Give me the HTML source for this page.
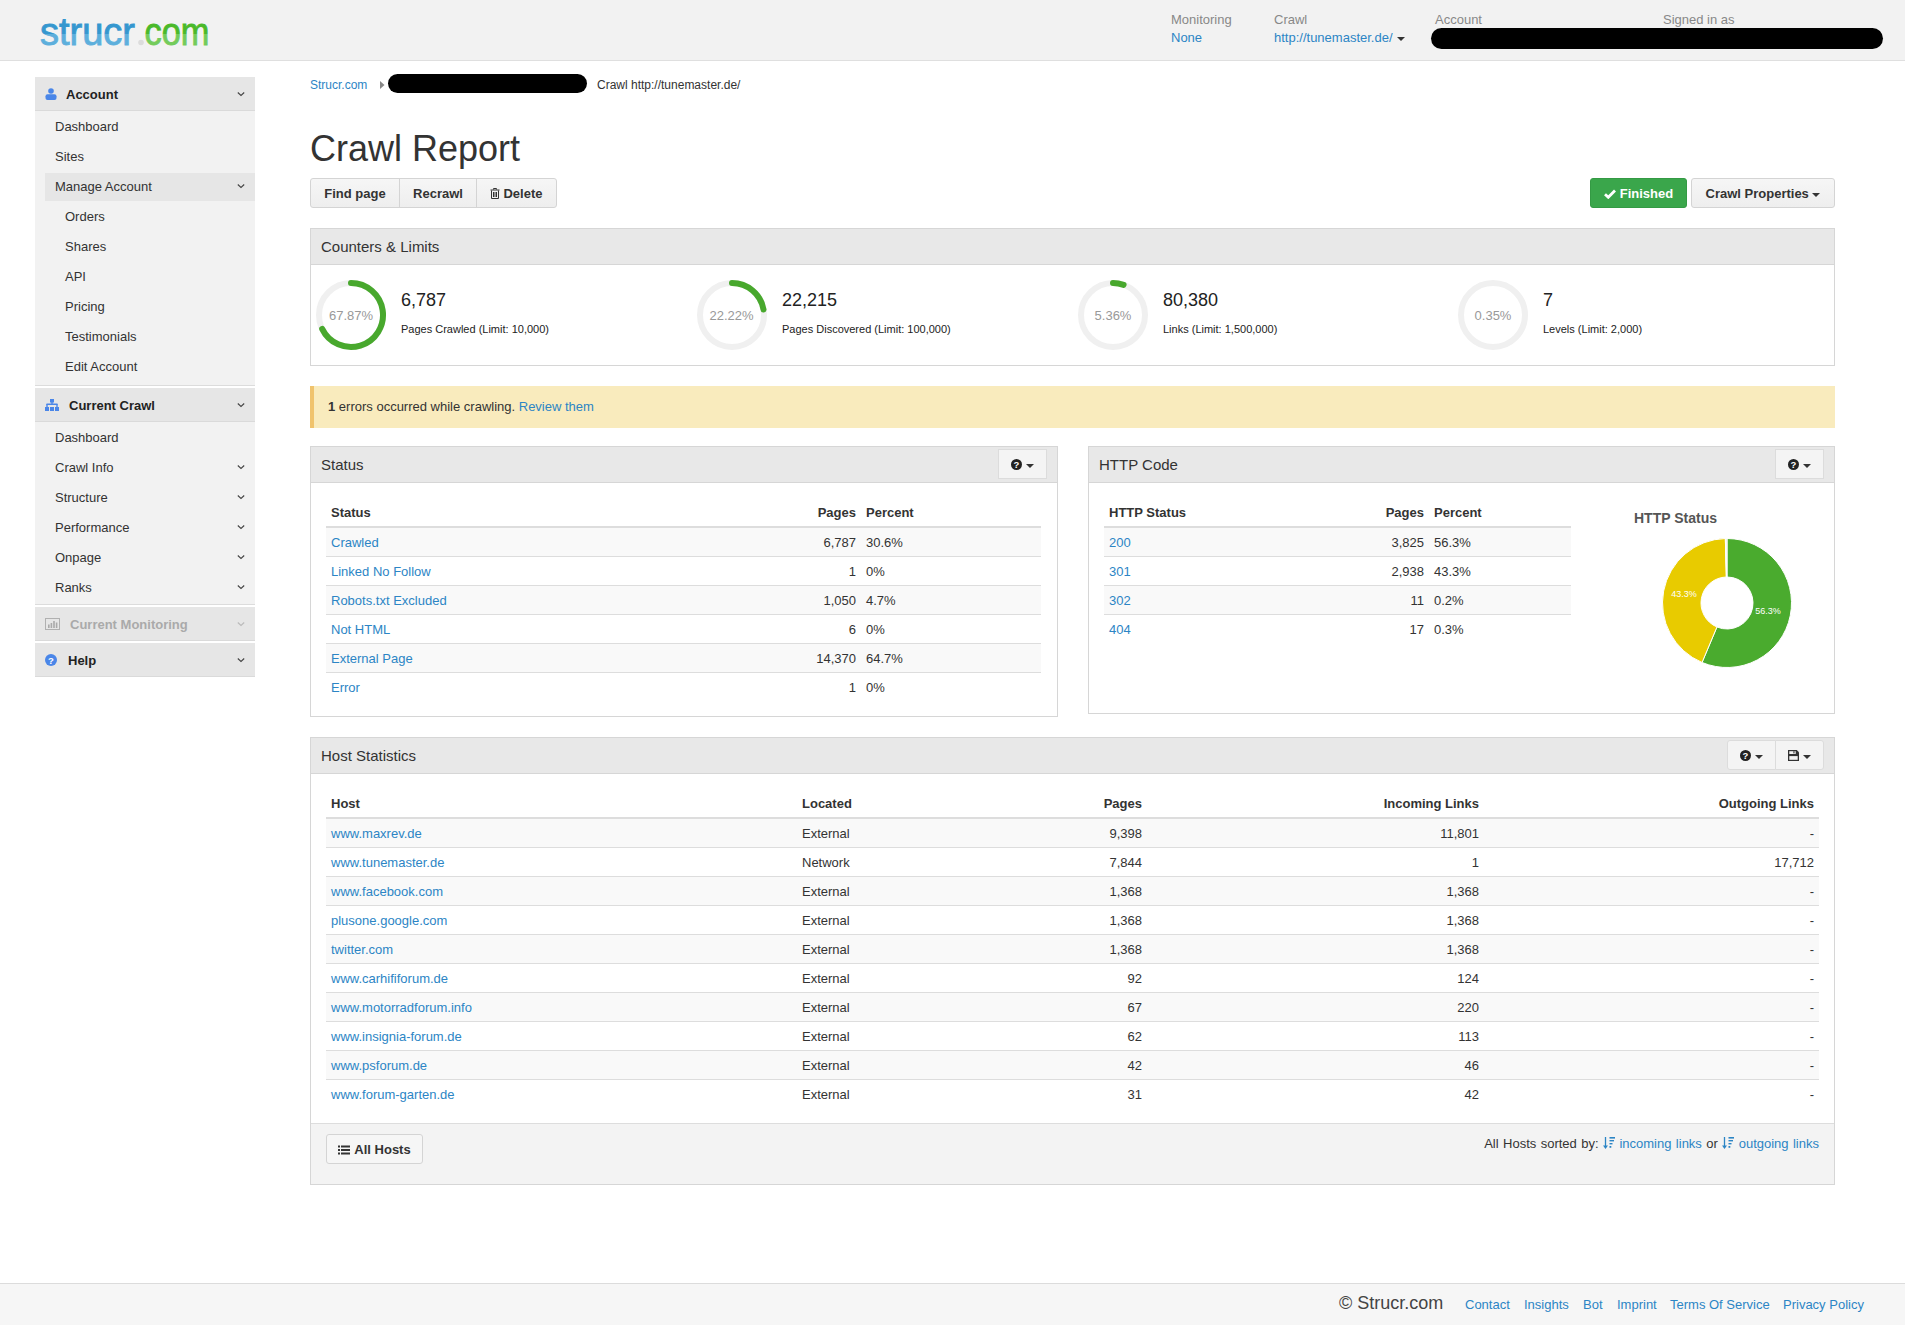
<!DOCTYPE html>
<html><head><meta charset="utf-8">
<style>
*{box-sizing:border-box;margin:0;padding:0}
html,body{width:1905px;height:1325px;overflow:hidden;background:#fff}
body{font-family:"Liberation Sans",sans-serif;font-size:13px;color:#333;position:relative;line-height:18px}
a{color:#2c85c5;text-decoration:none}
.abs{position:absolute}
/* header */
#hdr{position:absolute;left:0;top:0;width:1905px;height:61px;background:#f2f2f2;border-bottom:1px solid #dfdfdf}
#logo{position:absolute;left:40px;top:7px;font-size:44px;line-height:50px;font-weight:bold;letter-spacing:-2px}
.hl{position:absolute;color:#888;font-size:13px;line-height:18px}
.hv{position:absolute;font-size:13px;line-height:18px}
.caret{display:inline-block;width:0;height:0;border-top:4px solid #333;border-left:4px solid transparent;border-right:4px solid transparent;vertical-align:middle}
/* sidebar */
#side{position:absolute;left:35px;top:77px;width:220px}
.grp{background:#f2f2f2;border-bottom:1px solid #dcdcdc;margin-bottom:2px}
.gh{height:34px;background:#e6e6e6;border-bottom:1px solid #dadada;position:relative;font-weight:bold;font-size:13px;color:#222}
.gh .t{position:absolute;top:9px;line-height:18px}
.gh .ic{position:absolute;left:10px}
.chev{position:absolute;right:10px;width:8px;height:8px}
.si{height:30px;line-height:18px;padding-top:7px;position:relative;color:#333}
.si .chev{top:11px}
/* main */
.bc{position:absolute;top:77px;font-size:12px;line-height:16px}
h1{position:absolute;left:310px;top:127px;font-size:36px;font-weight:normal;line-height:44px;color:#333}
.btn{position:absolute;height:30px;background:linear-gradient(#f6f6f6,#eeeeee);border:1px solid #d4d4d4;font-weight:bold;font-size:13px;color:#333;line-height:28px;padding-top:1px;text-align:center}
.panel{position:absolute;border:1px solid #d6d6d6;background:#fff}
.ph{height:36px;background:#e8e8e8;border-bottom:1px solid #d6d6d6;position:relative}
.ph .t{position:absolute;left:10px;top:9px;font-size:15px;line-height:18px;color:#333}
.pbtn{position:absolute;top:2px;height:30px;background:#f4f4f4;border:1px solid #dcdcdc;}
table{border-collapse:separate;border-spacing:0;position:absolute;table-layout:fixed}
th{font-weight:bold;text-align:left;padding:6px 5px 4px;border-bottom:2px solid #ddd;line-height:18px}
td{padding:6px 5px 4px;border-top:1px solid #ddd;line-height:18px}
tbody tr:first-child td{border-top:0}
.qbtn{position:absolute;height:30px;background:#f4f4f4;border:1px solid #dcdcdc}
tbody tr:nth-child(odd) td{background:#f9f9f9}
.r{text-align:right}
.circ{position:absolute;width:72px;height:72px}
.cnum{position:absolute;font-size:18px;line-height:22px;color:#222}
.clab{position:absolute;font-size:11px;line-height:14px;color:#222}
</style></head><body>

<div id="hdr">
  <svg class="abs" style="left:0;top:0" width="260" height="60" viewBox="0 0 260 60"><defs><linearGradient id="gb" gradientUnits="userSpaceOnUse" x1="0" y1="18" x2="0" y2="46"><stop offset="0.57" stop-color="#3597cf"/><stop offset="0.57" stop-color="#5dafdc"/></linearGradient><linearGradient id="gg" gradientUnits="userSpaceOnUse" x1="0" y1="18" x2="0" y2="46"><stop offset="0.57" stop-color="#4ab92a"/><stop offset="0.57" stop-color="#73cb5b"/></linearGradient></defs><text x="40" y="45" font-family="Liberation Sans" font-size="39" textLength="95" lengthAdjust="spacingAndGlyphs" fill="url(#gb)" stroke="url(#gb)" stroke-width="0.9">strucr</text><circle cx="141" cy="42.5" r="2.8" fill="#dcdcdc"/><text x="144.5" y="45" font-family="Liberation Sans" font-size="39" textLength="65" lengthAdjust="spacingAndGlyphs" fill="url(#gg)" stroke="url(#gg)" stroke-width="0.9">com</text></svg>
  <div class="hl" style="left:1171px;top:11px">Monitoring</div>
  <div class="hv" style="left:1171px;top:29px"><a>None</a></div>
  <div class="hl" style="left:1274px;top:11px">Crawl</div>
  <div class="hv" style="left:1274px;top:29px"><a>http://tunemaster.de/</a></div>
  <span class="caret" style="position:absolute;left:1397px;top:37px"></span>
  <div class="hl" style="left:1435px;top:11px">Account</div>
  <div class="hl" style="left:1663px;top:11px">Signed in as</div>
  <div class="abs" style="left:1431px;top:28px;width:452px;height:21px;background:#000;border-radius:11px"></div>
</div>

<div id="side">
  <div class="grp">
    <div class="gh"><svg class="ic" style="top:11px" width="12" height="12" viewBox="0 0 12 12"><circle cx="6" cy="3" r="2.8" fill="#4a86e8"/><rect x="0.5" y="6.2" width="11" height="5.8" rx="2" fill="#4a86e8"/></svg><span class="t" style="left:31px">Account</span><svg class="chev" style="top:13px" viewBox="0 0 8 8"><path d="M0.8 2.5 L4 5.5 L7.2 2.5" stroke="#444" stroke-width="1.1" fill="none"/></svg></div>
    <div class="si" style="padding-left:20px">Dashboard</div>
    <div class="si" style="padding-left:20px">Sites</div>
    <div class="si" style="margin:2px 0 0 10px;height:28px;background:#e6e6e6;padding-left:10px;padding-top:5px">Manage Account<svg class="chev" style="top:9px" viewBox="0 0 8 8"><path d="M0.8 2.5 L4 5.5 L7.2 2.5" stroke="#444" stroke-width="1.1" fill="none"/></svg></div>
    <div class="si" style="padding-left:30px">Orders</div>
    <div class="si" style="padding-left:30px">Shares</div>
    <div class="si" style="padding-left:30px">API</div>
    <div class="si" style="padding-left:30px">Pricing</div>
    <div class="si" style="padding-left:30px">Testimonials</div>
    <div class="si" style="padding-left:30px">Edit Account</div>
    <div style="height:4px"></div>
  </div>
  <div class="grp">
    <div class="gh"><svg class="ic" style="top:11px" width="14" height="12" viewBox="0 0 14 12"><rect x="5" y="0" width="4" height="3.5" fill="#4a86e8"/><rect x="1.5" y="4.5" width="11" height="1.5" fill="#4a86e8"/><rect x="6.3" y="3" width="1.4" height="3" fill="#4a86e8"/><rect x="0" y="8" width="4" height="4" fill="#4a86e8"/><rect x="5" y="8" width="4" height="4" fill="#4a86e8"/><rect x="10" y="8" width="4" height="4" fill="#4a86e8"/><rect x="1.3" y="5" width="1.4" height="3" fill="#4a86e8"/><rect x="11.3" y="5" width="1.4" height="3" fill="#4a86e8"/></svg><span class="t" style="left:34px">Current Crawl</span><svg class="chev" style="top:13px" viewBox="0 0 8 8"><path d="M0.8 2.5 L4 5.5 L7.2 2.5" stroke="#444" stroke-width="1.1" fill="none"/></svg></div>
    <div class="si" style="padding-left:20px">Dashboard</div>
    <div class="si" style="padding-left:20px">Crawl Info<svg class="chev" viewBox="0 0 8 8"><path d="M0.8 2.5 L4 5.5 L7.2 2.5" stroke="#444" stroke-width="1.1" fill="none"/></svg></div>
    <div class="si" style="padding-left:20px">Structure<svg class="chev" viewBox="0 0 8 8"><path d="M0.8 2.5 L4 5.5 L7.2 2.5" stroke="#444" stroke-width="1.1" fill="none"/></svg></div>
    <div class="si" style="padding-left:20px">Performance<svg class="chev" viewBox="0 0 8 8"><path d="M0.8 2.5 L4 5.5 L7.2 2.5" stroke="#444" stroke-width="1.1" fill="none"/></svg></div>
    <div class="si" style="padding-left:20px">Onpage<svg class="chev" viewBox="0 0 8 8"><path d="M0.8 2.5 L4 5.5 L7.2 2.5" stroke="#444" stroke-width="1.1" fill="none"/></svg></div>
    <div class="si" style="padding-left:20px">Ranks<svg class="chev" viewBox="0 0 8 8"><path d="M0.8 2.5 L4 5.5 L7.2 2.5" stroke="#444" stroke-width="1.1" fill="none"/></svg></div>
    <div style="height:2px"></div>
  </div>
  <div class="grp" style="border-bottom:0">
    <div class="gh" style="color:#aaa"><svg class="ic" style="top:11px" width="15" height="12" viewBox="0 0 15 12"><rect x="0.5" y="0.5" width="14" height="11" fill="none" stroke="#b0b0b0"/><rect x="3" y="6.5" width="1.6" height="3.5" fill="#aaa"/><rect x="5.6" y="5" width="1.6" height="5" fill="#aaa"/><rect x="8.2" y="3" width="1.6" height="7" fill="#aaa"/><rect x="10.8" y="4.5" width="1.6" height="5.5" fill="#aaa"/></svg><span class="t" style="left:35px">Current Monitoring</span><svg class="chev" style="top:13px" viewBox="0 0 8 8"><path d="M0.8 2.5 L4 5.5 L7.2 2.5" stroke="#bbb" stroke-width="1.2" fill="none"/></svg></div>
  </div>
  <div class="grp" style="border-bottom:0">
    <div class="gh"><svg class="ic" style="top:11px" width="12" height="12" viewBox="0 0 12 12"><circle cx="6" cy="6" r="6" fill="#4a86e8"/><text x="6" y="9.6" font-size="9.5" font-weight="bold" fill="#fff" text-anchor="middle" font-family="Liberation Sans">?</text></svg><span class="t" style="left:33px">Help</span><svg class="chev" style="top:13px" viewBox="0 0 8 8"><path d="M0.8 2.5 L4 5.5 L7.2 2.5" stroke="#444" stroke-width="1.1" fill="none"/></svg></div>
  </div>
</div>

<!-- breadcrumb -->
<div class="bc" style="left:310px"><a>Strucr.com</a></div>
<svg class="abs" style="left:380px;top:81px" width="5" height="8" viewBox="0 0 5 8"><path d="M0 0 L4.5 4 L0 8 Z" fill="#888"/></svg>
<div class="abs" style="left:388px;top:74px;width:199px;height:19px;background:#000;border-radius:10px"></div>
<div class="bc" style="left:597px">Crawl http://tunemaster.de/</div>

<h1>Crawl Report</h1>

<div class="btn" style="left:310px;top:178px;width:90px;border-radius:3px 0 0 3px">Find page</div>
<div class="btn" style="left:399px;top:178px;width:78px;border-radius:0">Recrawl</div>
<div class="btn" style="left:476px;top:178px;width:81px;border-radius:0 3px 3px 0"><svg style="vertical-align:-1px;margin-right:3px" width="10" height="11" viewBox="0 0 10 11"><path d="M3.5 1.5 V0.5 H6.5 V1.5 M0.5 2 H9.5 M1.5 2.5 V10.5 H8.5 V2.5 M3.5 4 V9 M5 4 V9 M6.5 4 V9" stroke="#333" stroke-width="1" fill="none"/></svg>Delete</div>

<div class="abs" style="left:1590px;top:178px;width:97px;height:30px;background:#3aa64b;border:1px solid #349a44;border-radius:3px;color:#fff;font-weight:bold;line-height:28px;padding-top:1px;text-align:center"><svg width="12" height="10" viewBox="0 0 12 10" style="vertical-align:-1px;margin-right:4px"><path d="M1 5.2 L4.3 8.3 L11 1.6" stroke="#fff" stroke-width="2.8" fill="none"/></svg>Finished</div>
<div class="btn" style="left:1691px;top:178px;width:144px;border-radius:3px">Crawl Properties <span class="caret" style="margin-left:0px"></span></div>

<!-- counters -->
<div class="panel" style="left:310px;top:228px;width:1525px;height:138px">
  <div class="ph"><span class="t">Counters &amp; Limits</span></div>
</div>

<svg class="abs" style="left:315px;top:279px" width="72" height="72" viewBox="0 0 72 72"><circle cx="36" cy="36" r="32" stroke="#f0f0f0" stroke-width="6" fill="none"/><path d="M36 4 A32 32 0 1 1 7.16 49.86" stroke="#48a82d" stroke-width="6" fill="none" stroke-linecap="round"/></svg>
<div class="abs" style="left:311px;top:307px;width:80px;text-align:center;font-size:13px;line-height:18px;color:#999">67.87%</div>
<div class="cnum" style="left:401px;top:289px">6,787</div>
<div class="clab" style="left:401px;top:322px">Pages Crawled (Limit: 10,000)</div>
<svg class="abs" style="left:695.5px;top:279px" width="72" height="72" viewBox="0 0 72 72"><circle cx="36" cy="36" r="32" stroke="#f0f0f0" stroke-width="6" fill="none"/><path d="M36 4 A32 32 0 0 1 67.51 30.44" stroke="#48a82d" stroke-width="6" fill="none" stroke-linecap="round"/></svg>
<div class="abs" style="left:691.5px;top:307px;width:80px;text-align:center;font-size:13px;line-height:18px;color:#999">22.22%</div>
<div class="cnum" style="left:782px;top:289px">22,215</div>
<div class="clab" style="left:782px;top:322px">Pages Discovered (Limit: 100,000)</div>
<svg class="abs" style="left:1077px;top:279px" width="72" height="72" viewBox="0 0 72 72"><circle cx="36" cy="36" r="32" stroke="#f0f0f0" stroke-width="6" fill="none"/><path d="M36 4 A32 32 0 0 1 46.57 5.80" stroke="#48a82d" stroke-width="6" fill="none" stroke-linecap="round"/></svg>
<div class="abs" style="left:1073px;top:307px;width:80px;text-align:center;font-size:13px;line-height:18px;color:#999">5.36%</div>
<div class="cnum" style="left:1163px;top:289px">80,380</div>
<div class="clab" style="left:1163px;top:322px">Links (Limit: 1,500,000)</div>
<svg class="abs" style="left:1457px;top:279px" width="72" height="72" viewBox="0 0 72 72"><circle cx="36" cy="36" r="32" stroke="#f0f0f0" stroke-width="6" fill="none"/></svg>
<div class="abs" style="left:1453px;top:307px;width:80px;text-align:center;font-size:13px;line-height:18px;color:#999">0.35%</div>
<div class="cnum" style="left:1543px;top:289px">7</div>
<div class="clab" style="left:1543px;top:322px">Levels (Limit: 2,000)</div>
<!-- alert -->
<div class="abs" style="left:310px;top:386px;width:1525px;height:42px;background:#f9ebbd;border-left:4px solid #f0c36d;padding:12px 0 0 14px;font-size:13px;line-height:18px"><b>1</b> errors occurred while crawling. <a>Review them</a></div>

<!-- status -->
<div class="panel" style="left:310px;top:446px;width:748px;height:271px">
  <div class="ph"><span class="t">Status</span><div class="pbtn" style="left:687px;width:49px"><svg width="11" height="11" viewBox="0 0 11 11" style="position:absolute;left:12px;top:9px"><circle cx="5.5" cy="5.5" r="5.5" fill="#222"/><text x="5.5" y="9.3" font-size="9.5" font-weight="bold" fill="#fff" text-anchor="middle" font-family="Liberation Sans">?</text></svg><span class="caret" style="position:absolute;left:27px;top:14px"></span></div></div>
</div>

<!-- http code -->
<div class="panel" style="left:1088px;top:446px;width:747px;height:268px">
  <div class="ph"><span class="t">HTTP Code</span><div class="pbtn" style="left:686px;width:49px"><svg width="11" height="11" viewBox="0 0 11 11" style="position:absolute;left:12px;top:9px"><circle cx="5.5" cy="5.5" r="5.5" fill="#222"/><text x="5.5" y="9.3" font-size="9.5" font-weight="bold" fill="#fff" text-anchor="middle" font-family="Liberation Sans">?</text></svg><span class="caret" style="position:absolute;left:27px;top:14px"></span></div></div>
</div>

<div class="abs" style="left:1634px;top:509px;font-size:14px;line-height:18px;font-weight:bold;color:#555">HTTP Status</div>
<svg class="abs" style="left:1657px;top:533px" width="140" height="140" viewBox="0 0 140 140"><path d="M70.00 5.50 A64.5 64.5 0 1 1 45.04 129.47 L59.94 93.97 A26 26 0 1 0 70.00 44.00 Z" fill="#4aab2e" stroke="#fff" stroke-width="1" stroke-linejoin="round"/><path d="M45.04 129.47 A64.5 64.5 0 0 1 68.33 5.52 L69.33 44.01 A26 26 0 0 0 59.94 93.97 Z" fill="#e8cb00" stroke="#fff" stroke-width="1" stroke-linejoin="round"/><path d="M68.33 5.52 A64.5 64.5 0 0 1 68.99 5.51 L69.59 44.00 A26 26 0 0 0 69.33 44.01 Z" fill="#dddddd" stroke="#fff" stroke-width="1" stroke-linejoin="round"/><path d="M68.99 5.51 A64.5 64.5 0 0 1 70.00 5.50 L70.00 44.00 A26 26 0 0 0 69.59 44.00 Z" fill="#dddddd" stroke="#fff" stroke-width="1" stroke-linejoin="round"/>
<text x="27" y="64" font-size="9" fill="#fff" text-anchor="middle" font-family="Liberation Sans">43.3%</text>
<text x="111" y="81" font-size="9" fill="#fff" text-anchor="middle" font-family="Liberation Sans">56.3%</text></svg>
<!-- host stats -->
<div class="panel" style="left:310px;top:737px;width:1525px;height:448px">
  <div class="ph"><span class="t">Host Statistics</span><div class="pbtn" style="left:1416px;width:49px;border-radius:3px 0 0 3px"><svg width="11" height="11" viewBox="0 0 11 11" style="position:absolute;left:12px;top:9px"><circle cx="5.5" cy="5.5" r="5.5" fill="#222"/><text x="5.5" y="9.3" font-size="9.5" font-weight="bold" fill="#fff" text-anchor="middle" font-family="Liberation Sans">?</text></svg><span class="caret" style="position:absolute;left:27px;top:14px"></span></div><div class="pbtn" style="left:1464px;width:49px;border-radius:0 3px 3px 0"><svg width="11" height="11" viewBox="0 0 11 11" style="position:absolute;left:12px;top:9px"><path d="M0 0 H8.8 L11 2.2 V11 H0 Z" fill="#333"/><rect x="1.3" y="1.2" width="6.4" height="2.8" fill="#f4f4f4"/><rect x="5.4" y="1.2" width="1.1" height="2.2" fill="#333"/><rect x="1.3" y="6.1" width="8.4" height="3.7" fill="#f4f4f4"/></svg><span class="caret" style="position:absolute;left:27px;top:14px"></span></div></div>
  <div class="abs" style="left:0;top:385px;width:1523px;height:61px;background:#f3f3f3;border-top:1px solid #ddd"></div>
</div>

<table style="left:326px;top:498px;width:715px"><colgroup><col style="width:480px"><col style="width:55px"><col style="width:180px"></colgroup><thead><tr><th>Status</th><th class="r">Pages</th><th>Percent</th></tr></thead><tbody><tr><td><a>Crawled</a></td><td class="r">6,787</td><td>30.6%</td></tr><tr><td><a>Linked No Follow</a></td><td class="r">1</td><td>0%</td></tr><tr><td><a>Robots.txt Excluded</a></td><td class="r">1,050</td><td>4.7%</td></tr><tr><td><a>Not HTML</a></td><td class="r">6</td><td>0%</td></tr><tr><td><a>External Page</a></td><td class="r">14,370</td><td>64.7%</td></tr><tr><td><a>Error</a></td><td class="r">1</td><td>0%</td></tr></tbody></table>
<table style="left:1104px;top:498px;width:467px"><colgroup><col style="width:270px"><col style="width:55px"><col style="width:142px"></colgroup><thead><tr><th>HTTP Status</th><th class="r">Pages</th><th>Percent</th></tr></thead><tbody><tr><td><a>200</a></td><td class="r">3,825</td><td>56.3%</td></tr><tr><td><a>301</a></td><td class="r">2,938</td><td>43.3%</td></tr><tr><td><a>302</a></td><td class="r">11</td><td>0.2%</td></tr><tr><td><a>404</a></td><td class="r">17</td><td>0.3%</td></tr></tbody></table>
<table style="left:326px;top:789px;width:1493px"><colgroup><col style="width:471px"><col style="width:175px"><col style="width:175px"><col style="width:337px"><col style="width:335px"></colgroup><thead><tr><th>Host</th><th>Located</th><th class="r">Pages</th><th class="r">Incoming Links</th><th class="r">Outgoing Links</th></tr></thead><tbody><tr><td><a>www.maxrev.de</a></td><td>External</td><td class="r">9,398</td><td class="r">11,801</td><td class="r">-</td></tr><tr><td><a>www.tunemaster.de</a></td><td>Network</td><td class="r">7,844</td><td class="r">1</td><td class="r">17,712</td></tr><tr><td><a>www.facebook.com</a></td><td>External</td><td class="r">1,368</td><td class="r">1,368</td><td class="r">-</td></tr><tr><td><a>plusone.google.com</a></td><td>External</td><td class="r">1,368</td><td class="r">1,368</td><td class="r">-</td></tr><tr><td><a>twitter.com</a></td><td>External</td><td class="r">1,368</td><td class="r">1,368</td><td class="r">-</td></tr><tr><td><a>www.carhififorum.de</a></td><td>External</td><td class="r">92</td><td class="r">124</td><td class="r">-</td></tr><tr><td><a>www.motorradforum.info</a></td><td>External</td><td class="r">67</td><td class="r">220</td><td class="r">-</td></tr><tr><td><a>www.insignia-forum.de</a></td><td>External</td><td class="r">62</td><td class="r">113</td><td class="r">-</td></tr><tr><td><a>www.psforum.de</a></td><td>External</td><td class="r">42</td><td class="r">46</td><td class="r">-</td></tr><tr><td><a>www.forum-garten.de</a></td><td>External</td><td class="r">31</td><td class="r">42</td><td class="r">-</td></tr></tbody></table>
<div class="btn" style="left:326px;top:1134px;width:97px;border-radius:3px;background:#f6f6f6"><svg width="12" height="10" viewBox="0 0 12 10" style="vertical-align:-1px;margin-right:4px"><rect x="0" y="0.5" width="2" height="2" fill="#333"/><rect x="0" y="4" width="2" height="2" fill="#333"/><rect x="0" y="7.5" width="2" height="2" fill="#333"/><rect x="3" y="0.5" width="9" height="2" fill="#333"/><rect x="3" y="4" width="9" height="2" fill="#333"/><rect x="3" y="7.5" width="9" height="2" fill="#333"/></svg>All Hosts</div>
<div class="abs" style="left:1300px;top:1135px;width:519px;text-align:right;font-size:13px;line-height:18px;word-spacing:0.8px">All Hosts sorted by: <svg width="12" height="13" viewBox="0 0 12 13" style="vertical-align:-2px"><path d="M2.5 0 V10" stroke="#2c85c5" stroke-width="1.3" fill="none"/><path d="M0 8.5 L2.5 12 L5 8.5 Z" fill="#2c85c5"/><rect x="6.5" y="0" width="6" height="1.6" fill="#2c85c5"/><rect x="6.5" y="3" width="4.5" height="1.4" fill="#2c85c5"/><rect x="6.5" y="6" width="3" height="1.4" fill="#2c85c5"/><rect x="6.5" y="9" width="1.8" height="1.8" fill="#2c85c5"/></svg> <a>incoming links</a> or <svg width="12" height="13" viewBox="0 0 12 13" style="vertical-align:-2px"><path d="M2.5 0 V10" stroke="#2c85c5" stroke-width="1.3" fill="none"/><path d="M0 8.5 L2.5 12 L5 8.5 Z" fill="#2c85c5"/><rect x="6.5" y="0" width="6" height="1.6" fill="#2c85c5"/><rect x="6.5" y="3" width="4.5" height="1.4" fill="#2c85c5"/><rect x="6.5" y="6" width="3" height="1.4" fill="#2c85c5"/><rect x="6.5" y="9" width="1.8" height="1.8" fill="#2c85c5"/></svg> <a>outgoing links</a></div>
<!-- footer -->
<div class="abs" style="left:0;top:1283px;width:1905px;height:42px;background:#f6f6f6;border-top:1px solid #dcdcdc"></div>
<div class="abs" style="left:1339px;top:1292px;font-size:18px;line-height:22px;color:#444">&copy; Strucr.com</div>
<div class="abs" style="left:1465px;top:1296px;font-size:13px;line-height:18px"><a>Contact</a></div>
<div class="abs" style="left:1524px;top:1296px;font-size:13px;line-height:18px"><a>Insights</a></div>
<div class="abs" style="left:1583px;top:1296px;font-size:13px;line-height:18px"><a>Bot</a></div>
<div class="abs" style="left:1617px;top:1296px;font-size:13px;line-height:18px"><a>Imprint</a></div>
<div class="abs" style="left:1670px;top:1296px;font-size:13px;line-height:18px"><a>Terms Of Service</a></div>
<div class="abs" style="left:1783px;top:1296px;font-size:13px;line-height:18px"><a>Privacy Policy</a></div>
</body></html>
